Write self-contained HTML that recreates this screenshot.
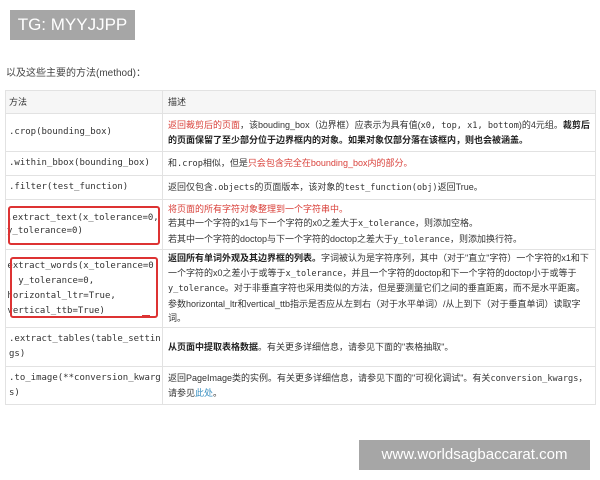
<!DOCTYPE html>
<html><head><meta charset="utf-8"><style>
body{margin:0;width:600px;height:480px;background:#fff;position:relative;overflow:hidden;font-family:"Liberation Sans","Noto Sans CJK SC",sans-serif;color:#333}
.tg{position:absolute;left:10px;top:10px;width:125px;height:30px;background:#a6a6a6;color:#fff;font-size:17px;line-height:30px;text-align:center}
.ft{position:absolute;left:359px;top:440px;width:231px;height:30px;background:#a6a6a6;color:#fff;font-size:15px;line-height:30px;text-align:center}
.intro{position:absolute;left:6px;top:64px;font-size:10px;color:#444}
.r{position:absolute;left:5px;width:591px;border:1px solid #e2e2e2;border-top:none;box-sizing:border-box;display:flex}
.r.g{background:#f6f6f6}
.c1{width:157px;border-right:1px solid #e2e2e2;box-sizing:border-box;padding:0 3px;font-family:"DejaVu Sans Mono","Noto Sans CJK SC",monospace;font-size:9px;line-height:13px;display:flex;align-items:center;position:relative;overflow:hidden}
.c2{flex:1;padding:0 5px;font-size:9px;line-height:14.5px;display:flex;align-items:center}
.m{font-family:"DejaVu Sans Mono","Noto Sans CJK SC",monospace;font-size:8.6px}
.red{color:#d9403a}
b{font-weight:bold;color:#222}
.box{position:absolute;border:2px solid #d33;border-radius:3px}
</style></head><body>
<div class="tg">TG: MYYJJPP</div>
<div class="intro">以及这些主要的方法(method)：</div>
<div class="r g" style="top:90px;height:24px;border-top:1px solid #e2e2e2"><div class="c1" style="font-family:'Liberation Sans','Noto Sans CJK SC',sans-serif">方法</div><div class="c2">描述</div></div>
<div class="r" style="top:114px;height:38px"><div class="c1">.crop(bounding_box)</div><div class="c2"><div><span class="red">返回裁剪后的页面</span>，该bouding_box（边界框）应表示为具有值(<span class="m">x0, top, x1, bottom</span>)的4元组。<b>裁剪后的页面保留了至少部分位于边界框内的对象。如果对象仅部分落在该框内，则也会被涵盖。</b></div></div></div>
<div class="r" style="top:152px;height:24px"><div class="c1">.within_bbox(bounding_box)</div><div class="c2"><div>和<span class="m">.crop</span>相似，但是<span class="red">只会包含完全在bounding_box内的部分。</span></div></div></div>
<div class="r" style="top:176px;height:24px"><div class="c1">.filter(test_function)</div><div class="c2"><div>返回仅包含<span class="m">.objects</span>的页面版本，该对象的<span class="m">test_function(obj)</span>返回True。</div></div></div>
<div class="r" style="top:200px;height:50px"><div class="c1" style="padding-left:1px">.extract_text(x_tolerance=0,<br>y_tolerance=0)</div><div class="c2"><div><span class="red">将页面的所有字符对象整理到一个字符串中。</span><br>若其中一个字符的x1与下一个字符的x0之差大于<span class="m">x_tolerance</span>，则添加空格。<br>若其中一个字符的doctop与下一个字符的doctop之差大于<span class="m">y_tolerance</span>，则添加换行符。</div></div></div>
<div class="r" style="top:250px;height:78px"><div class="c1" style="white-space:pre;padding-left:0;line-height:15px"><div style="margin-left:-4px">.extract_words(x_tolerance=0
,  y_tolerance=0,
 horizontal_ltr=True,
 vertical_ttb=True)</div></div><div class="c2"><div><b>返回所有单词外观及其边界框的列表。</b>字词被认为是字符序列，其中（对于"直立"字符）一个字符的x1和下一个字符的x0之差小于或等于<span class="m">x_tolerance</span>，并且一个字符的doctop和下一个字符的doctop小于或等于<span class="m">y_tolerance</span>。对于非垂直字符也采用类似的方法，但是要测量它们之间的垂直距离，而不是水平距离。参数horizontal_ltr和vertical_ttb指示是否应从左到右（对于水平单词）/从上到下（对于垂直单词）读取字词。</div></div></div>
<div class="r" style="top:328px;height:39px"><div class="c1" style="line-height:15px">.extract_tables(table_settin<br>gs)</div><div class="c2"><div><b>从页面中提取表格数据</b>。有关更多详细信息，请参见下面的"表格抽取"。</div></div></div>
<div class="r" style="top:367px;height:38px"><div class="c1" style="line-height:15px">.to_image(**conversion_kwarg<br>s)</div><div class="c2"><div>返回PageImage类的实例。有关更多详细信息，请参见下面的"可视化调试"。有关<span class="m">conversion_kwargs</span>，请参见<span style="color:#3a8fc0">此处</span>。</div></div></div>
<div class="box" style="left:8px;top:206px;width:148px;height:35px"></div>
<div class="box" style="left:10px;top:257px;width:144px;height:57px"></div>
<div style="position:absolute;left:142px;top:315px;width:8px;height:2px;background:#d33"></div>
<div class="ft">www.worldsagbaccarat.com</div>
</body></html>
